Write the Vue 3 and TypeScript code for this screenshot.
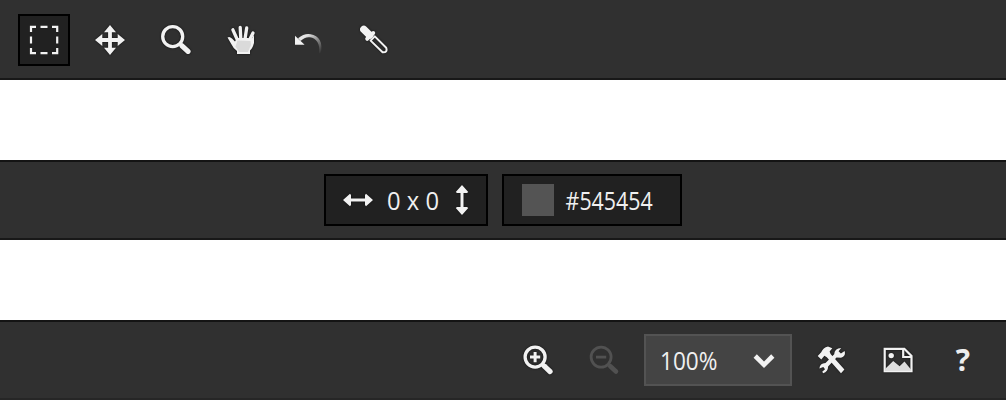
<script setup lang="ts">
import { ref } from 'vue'

const activeTool = ref('select')
const tools = ['select', 'move', 'zoom', 'hand', 'undo', 'picker']
const color = ref('#545454')
</script>

<template>
  <main class="page">
    <header class="bar">
      <button
        v-for="tool in tools"
        :key="tool"
        class="tool"
        :class="{ active: activeTool === tool }"
        @click="activeTool = tool"
      >
        <svg v-if="tool === 'select'" class="icon" viewBox="0 0 32 32">
          <path class="line" stroke-width="2.2" d="M3 8V2.8H8M12.5 2.8H19.5M24 2.8H29.2V8M29.2 12.5V19.5M29.2 24V29.2H24M19.5 29.2H12.5M8 29.2H3V24M3 19.5V12.5" />
        </svg>
        <svg v-else-if="tool === 'move'" class="icon outlined" viewBox="0 0 32 32">
          <path d="M16 1L22 8.3H17.9V14.1H23.7V10L31 16L23.7 22V17.9H17.9V23.7H22L16 31L10 23.7H14.1V17.9H8.3V22L1 16L8.3 10V14.1H14.1V8.3H10Z" />
        </svg>
        <svg v-else-if="tool === 'zoom'" class="icon outlined" viewBox="0 0 32 32">
          <circle class="line" stroke-width="3.3" cx="12.7" cy="12.6" r="10" />
          <path class="line round" stroke-width="5.2" d="M22 21.8L28 27.4" />
        </svg>
        <svg v-else-if="tool === 'hand'" class="icon outlined" viewBox="0 0 32 32">
          <path class="line round" stroke-width="3.3" d="M11 15L6.9 5.8M14.8 15L14.2 3.4M19 15L20.7 4M23 17L27 9" />
          <path d="M1.5 13.6Q3.4 11.8 6 14.5L9 17.5L11 14H22L25.6 15L28 11L28 19Q26.5 24.5 24 26.5V30H11V27Q7.4 24.6 5.4 20.2Z" />
          <path fill="#dadada" d="M11.5 16.5L24.5 17L25 21L22 28H13L9.5 22.5Z" />
        </svg>
        <svg v-else-if="tool === 'undo'" class="icon" viewBox="0 0 32 32">
          <defs>
            <linearGradient id="undo-fade" gradientUnits="userSpaceOnUse" x1="15" y1="11" x2="29" y2="29">
              <stop offset="0" stop-color="#e5e5e5" />
              <stop offset=".5" stop-color="#808080" />
              <stop offset="1" stop-color="#303030" />
            </linearGradient>
          </defs>
          <path fill="url(#undo-fade)" d="M6 14.3Q12 9.3 18.5 10.2C27 11.2 31.5 19 28.6 29.5L27 29C28.5 20 24.3 14.3 18 13.3Q13 12.6 8.5 17Z" />
          <path d="M3 11.8L12.6 20.8H3Z" />
        </svg>
        <svg v-else class="icon outlined" viewBox="0 0 32 32">
          <path class="line round" stroke-width="7.4" d="M5.8 5.4L11.6 11.2" />
          <path class="line round" stroke-width="4" d="M9.2 14.8L15.2 9" />
          <path class="line" stroke-width="2" stroke-linejoin="round" d="M12.6 16.6L16.8 12.4L28.2 23.8Q29.8 28.7 24.6 28.2Z" />
        </svg>
      </button>
    </header>

    <section class="bar center">
      <div class="panel size">
        <svg class="icon outlined" viewBox="0 0 32 32">
          <path d="M1 16L8 9.8L9 11V14.5H23V11L24 9.8L31 16L24 22.2L23 21V17.5H9V21L8 22.2Z" />
        </svg>
        <svg class="label dims" viewBox="0 0 52 32"><text x="0" y="26.3" textLength="52" lengthAdjust="spacingAndGlyphs">0 x 0</text></svg>
        <svg class="icon outlined upright" viewBox="0 0 32 32">
          <path d="M1 16L8 9.8L9 11V14.5H23V11L24 9.8L31 16L24 22.2L23 21V17.5H9V21L8 22.2Z" />
        </svg>
      </div>
      <div class="panel color">
        <span class="swatch" :style="{ background: color }"></span>
        <svg class="label hex" viewBox="0 0 88 32"><text x="0.6" y="26.3" textLength="87" lengthAdjust="spacingAndGlyphs">{{ color }}</text></svg>
      </div>
    </section>

    <footer class="bar end">
      <button class="tool">
        <svg class="icon outlined" viewBox="0 0 32 32">
          <circle class="line" stroke-width="3.3" cx="13.1" cy="13.1" r="10" />
          <path class="line round" stroke-width="5.2" d="M22.3 22.2L28 27.5" />
          <path class="line" stroke-width="3" d="M8 13.1H18.2M13.1 8V18.2" />
        </svg>
      </button>
      <button class="tool disabled">
        <svg class="icon" viewBox="0 0 32 32">
          <circle class="line" stroke-width="2.8" cx="13.1" cy="13.1" r="10" />
          <path class="line round" stroke-width="4.6" d="M22.3 22.2L28 27.5" />
          <path class="line" stroke-width="2.8" d="M8 13.1H18.2" />
        </svg>
      </button>
      <div class="zoom-select">
        <svg class="label percent" viewBox="0 0 58 32"><text x="0" y="26.3" textLength="57.5" lengthAdjust="spacingAndGlyphs">100%</text></svg>
        <svg class="chevron" viewBox="0 0 22 16"><path class="line" stroke-width="4.6" d="M2.2 3L11 11.8L19.8 3" /></svg>
      </div>
      <button class="tool">
        <svg class="icon outlined" viewBox="0 0 32 32">
          <path d="M1.7 12L5.2 8.2Q7 3.6 12 2.4L16.3 4.2L13.6 7.4L14.6 10L28.4 25.6L25 29.2L10.8 13.3L8.4 11.8L5.3 15.4Z" />
          <path d="M25.2 4L22.6 7.2L24.9 9.6L28.6 7Q30.2 12 25 13.8L20.5 13.6L12.1 22.4Q12.2 27.8 7.2 29.2L6.2 27.8L9 25.2L7.3 22.9L3.4 24.4Q3.7 19.4 9.5 19L18.2 10.2Q18.4 4.6 25.2 4Z" />
        </svg>
      </button>
      <button class="tool">
        <svg class="icon outlined" viewBox="0 0 32 32">
          <path class="line" stroke-width="2.2" d="M2.7 4.8H22.3L29.5 12V27.2H2.7Z" />
          <path class="line" stroke-width="2.2" d="M21.2 4.8V13H29.5" />
          <circle cx="9.2" cy="11.6" r="2.7" />
          <path fill="#dedede" d="M3 25L11.2 17L17.6 22.3L22.5 17.4L29 25.4V27H3Z" />
        </svg>
      </button>
      <button class="tool help">?</button>
    </footer>
  </main>
</template>

<style scoped>
.page {
  display: flex;
  flex-direction: column;
  gap: 80px;
  width: 1006px;
  height: 400px;
  background: #fff;
  font-family: "Open Sans", "Noto Sans", sans-serif;
}
.bar {
  display: flex;
  align-items: center;
  gap: 14px;
  height: 80px;
  flex: none;
  box-sizing: border-box;
  padding: 0 18px;
  background: #303030;
  border-bottom: 2px solid #181818;
  padding-top: 2px;
}
.bar.center { justify-content: center; border-top: 2px solid #141414; padding-top: 0; }
.bar.end { justify-content: flex-end; border-top: 2px solid #141414; border-bottom: 2px solid #262626; padding: 0 16px 0 0; }
.tool {
  display: flex;
  align-items: center;
  justify-content: center;
  width: 52px;
  height: 52px;
  flex: none;
  box-sizing: border-box;
  padding: 0;
  border: 2px solid transparent;
  background: transparent;
  font-family: inherit;
}
.tool.active { background: #212121; border-color: #000; }
.icon { display: block; width: 32px; height: 32px; flex: none; fill: #f2f2f2; color: #f2f2f2; overflow: visible; }
.outlined { filter: drop-shadow(0 0 1px #111); }
.line { fill: none; stroke: currentColor; }
.round { stroke-linecap: round; }
.disabled .icon { color: #515151; }
.panel {
  display: flex;
  align-items: center;
  height: 52px;
  box-sizing: border-box;
  border: 2px solid #000;
  background: #212121;
}
.size { width: 164px; padding-left: 16px; }
.color { width: 180px; padding-left: 18px; }
.upright { transform: rotate(90deg); margin-left: 7px; }
.swatch { width: 32px; height: 32px; }
.label { display: block; height: 32px; overflow: visible; fill: #f0f0f0; font-size: 25.5px; }
.dims { width: 52px; margin-left: 13px; }
.hex { width: 88px; margin-left: 11px; }
.percent { width: 58px; }
.zoom-select {
  display: flex;
  align-items: center;
  justify-content: space-between;
  box-sizing: border-box;
  width: 148px;
  height: 52px;
  padding: 0 15px 0 14px;
  border: 2px solid #535353;
  background: #444;
}
.chevron { width: 22px; height: 16px; color: #f2f2f2; margin-top: 2px; }
.help { color: #ededed; font-size: 30px; font-weight: 700; line-height: 32px; padding-right: 2px; }
</style>

<style>
body { margin: 0; overflow: hidden; }
</style>
